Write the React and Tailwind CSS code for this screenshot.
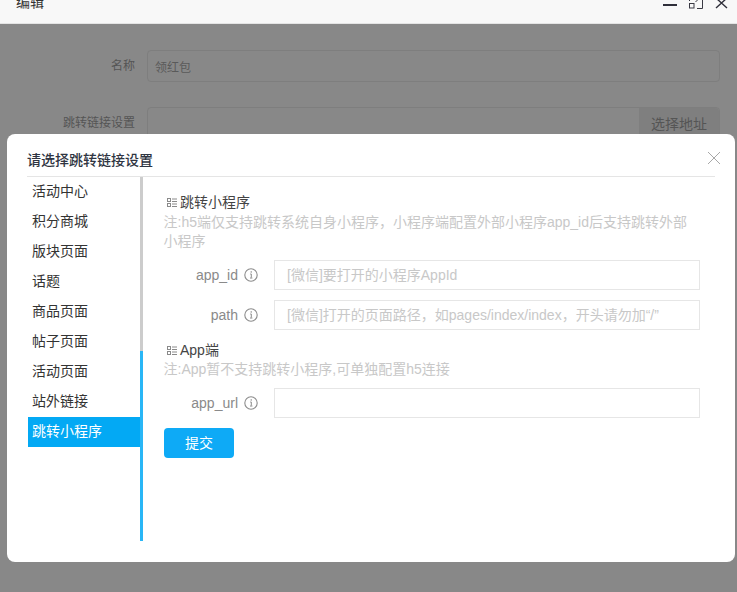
const FONT = "font-['Liberation_Sans','Noto_Sans_CJK_SC',sans-serif]";

function Info() {
  return (
    <svg width="14" height="14" viewBox="0 0 14 14" fill="none" className="shrink-0">
      <circle cx="7" cy="7" r="6.2" stroke="#8c8c8c" strokeWidth="1.1" />
      <rect x="6.6" y="3.3" width="1.3" height="1.3" fill="#8c8c8c" />
      <path d="M6.2 6h1.1v3.6M6 10h2.4" stroke="#8c8c8c" strokeWidth="1" />
    </svg>
  );
}

function ListIcon() {
  return (
    <svg width="10" height="9" viewBox="0 0 10 9" fill="none" className="shrink-0 ml-[3px]" stroke="#8a8a8a" strokeWidth="1">
      <rect x="0.5" y="0.5" width="3" height="3" />
      <rect x="0.5" y="5.5" width="3" height="3" />
      <path d="M5 1h5M5 3.5h5M5 6h5M5 8.5h5" />
    </svg>
  );
}

function Field({ label, placeholder, mt }) {
  return (
    <div className={`flex items-center h-[30px] ${mt}`}>
      <span className="w-[74px] text-right text-[14px] text-[#8a8a8a]">{label}</span>
      <span className="w-[26px] mr-[10px] flex justify-center"><Info /></span>
      <div className="w-[426px] h-[30px] border border-[#e6e6e6] pl-3 flex items-center text-[14px] text-[#c8c8c8] whitespace-nowrap">
        {placeholder}
      </div>
    </div>
  );
}

export default function App() {
  const items = ["活动中心", "积分商城", "版块页面", "话题", "商品页面", "帖子页面", "活动页面", "站外链接", "跳转小程序"];
  return (
    <div className={`relative w-[737px] h-[592px] overflow-hidden bg-[#888888] ${FONT}`}>
      <div className="h-[24px] bg-[#f8f8f8] border-b border-[#e4e4e4] flex items-center justify-between pl-[16px] pr-[9px] overflow-hidden">
        <span className="text-[14px] leading-[14px] text-[#333] -mt-[20px]">编辑</span>
        <div className="flex items-center gap-[12px] -mt-[20px]">
          <svg width="14" height="14" viewBox="0 0 14 14" fill="none" stroke="#2f2f3a">
            <path d="M0 10h14" strokeWidth="2" />
          </svg>
          <svg width="14" height="16" viewBox="0 0 14 16" fill="none" stroke="#3a3a44" strokeWidth="1">
            <rect x="0.5" y="9.5" width="4.5" height="4.5" />
            <path d="M0.5 7V1.5h5M8 1.5h5.5v13H8M6.5 8L12.5 2M9.5 2h3.5v3.5" />
          </svg>
          <svg width="13" height="14" viewBox="0 0 13 14" fill="none" stroke="#2f2f3a" strokeWidth="1.4">
            <path d="M1 3l11 10M12 3L1 13" />
          </svg>
        </div>
      </div>

      <div className="flex items-center mt-[26px] pl-[147px] pr-[17px] relative">
        <span className="absolute right-[602px] text-[12px] text-[#555]">名称</span>
        <div className="flex-1 h-[32px] rounded-[4px] border border-[#7e7e7e] flex items-center pl-[7px] pt-[3px] text-[12px] text-[#5a5a5a]">领红包</div>
      </div>
      <div className="flex items-center mt-[25px] pl-[147px] pr-[17px] relative">
        <span className="absolute right-[602px] text-[12px] text-[#555]">跳转链接设置</span>
        <div className="flex-1 h-[32px] rounded-[4px] border border-[#7e7e7e] flex justify-end">
          <div className="w-[80px] pt-[2px] bg-[#7f7f7f] text-[14px] text-[#555] flex items-center justify-center rounded-r-[4px]">选择地址</div>
        </div>
      </div>

      <div className="absolute left-[7px] top-[134px] w-[728px] h-[428px] bg-white rounded-[8px] pl-[20px] pr-[20px]">
        <div className="relative h-[43px] border-b border-[#e5e5e5] flex items-center pt-[10px]">
          <span className="text-[14px] font-medium text-[#2f3542]">请选择跳转链接设置</span>
          <svg className="absolute right-[-6px] top-[17px]" width="14" height="14" viewBox="0 0 14 14" fill="none" stroke="#a8a8a8" strokeWidth="1">
            <path d="M1 1l12 12M13 1L1 13" />
          </svg>
        </div>
        <div className="flex">
          <div className="w-[112px] ml-[1px] shrink-0">
            {items.map((t, i) => (
              <div key={t} className={`h-[30px] flex items-center pl-[4px] pb-[2px] text-[14px] ${i === 8 ? "bg-[#03a9f4] text-white" : "text-[#333]"}`}>{t}</div>
            ))}
          </div>
          <div className="w-[3px] h-[364px] shrink-0 flex flex-col">
            <div className="h-[174px] bg-[#cccccc]" />
            <div className="flex-1 bg-[#29b6f6]" />
          </div>
          <div className="pl-[21px] w-[560px]">
            <div className="flex items-center gap-[3px] h-[20px] mt-[15px] text-[14px] text-[#444]"><ListIcon />跳转小程序</div>
            <div className="text-[14px] leading-[19px] text-[#c8c8c8] w-[530px] mt-[1px] -ml-[0.5px]">注:h5端仅支持跳转系统自身小程序，小程序端配置外部小程序app_id后支持跳转外部小程序</div>
            <Field label="app_id" placeholder="[微信]要打开的小程序AppId" mt="mt-[9px]" />
            <Field label="path" placeholder="[微信]打开的页面路径，如pages/index/index，开头请勿加“/”" mt="mt-[10px]" />
            <div className="flex items-center gap-[3px] h-[20px] mt-[10px] text-[14px] text-[#444]"><ListIcon />App端</div>
            <div className="text-[14px] leading-[19px] text-[#c8c8c8] -ml-[0.5px]">注:App暂不支持跳转小程序,可单独配置h5连接</div>
            <Field label="app_url" placeholder="" mt="mt-[9px]" />
            <div className="w-[70px] h-[30px] mt-[10px] rounded-[4px] bg-[#0eaaf6] text-white text-[14px] flex items-center justify-center">提交</div>
          </div>
        </div>
      </div>
    </div>
  );
}
